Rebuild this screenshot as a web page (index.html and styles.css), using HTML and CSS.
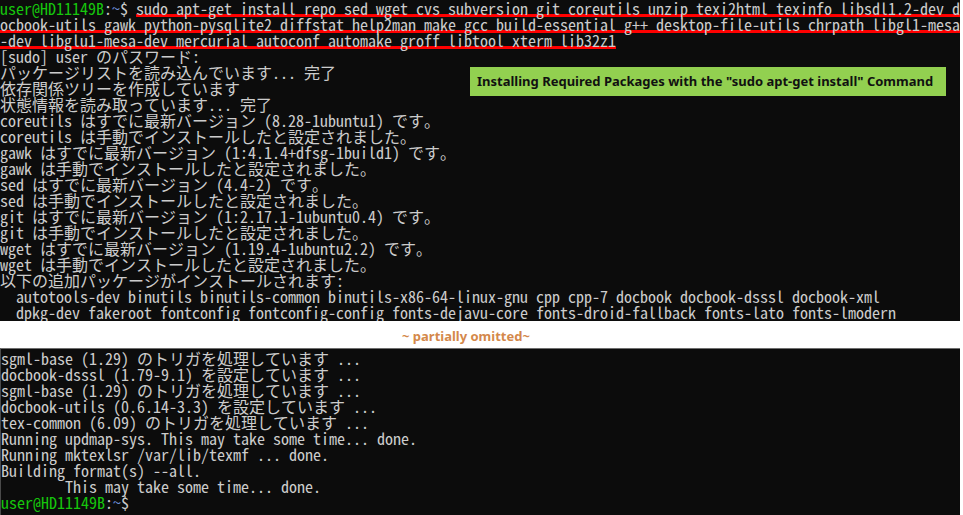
FILE: index.html
```html
<!DOCTYPE html>
<html lang="ja">
<head>
<meta charset="utf-8">
<title>sudo apt-get install</title>
<link rel="stylesheet" href="styles.css">
</head>
<body>
<div class="shot">
  <div class="term term-top">
    <div class="ln"><span class="pu">user@HD11149B</span><span class="pc">:</span><span class="pt">~</span><span class="pc">$ </span><span class="mark">sudo apt-get install repo sed wget cvs subversion git coreutils unzip texi2html texinfo libsdl1.2-dev d</span></div>
    <div class="ln"><span class="mark">ocbook-utils gawk python-pysqlite2 diffstat help2man make gcc build-essential g++ desktop-file-utils chrpath libgl1-mesa</span></div>
    <div class="ln"><span class="mark">-dev libglu1-mesa-dev mercurial autoconf automake groff libtool xterm lib32z1</span></div>
    <div class="ln">[sudo] user のパスワード:</div>
    <div class="ln">パッケージリストを読み込んでいます... 完了</div>
    <div class="ln">依存関係ツリーを作成しています</div>
    <div class="ln">状態情報を読み取っています... 完了</div>
    <div class="ln">coreutils はすでに最新バージョン (8.28-1ubuntu1) です。</div>
    <div class="ln">coreutils は手動でインストールしたと設定されました。</div>
    <div class="ln">gawk はすでに最新バージョン (1:4.1.4+dfsg-1build1) です。</div>
    <div class="ln">gawk は手動でインストールしたと設定されました。</div>
    <div class="ln">sed はすでに最新バージョン (4.4-2) です。</div>
    <div class="ln">sed は手動でインストールしたと設定されました。</div>
    <div class="ln">git はすでに最新バージョン (1:2.17.1-1ubuntu0.4) です。</div>
    <div class="ln">git は手動でインストールしたと設定されました。</div>
    <div class="ln">wget はすでに最新バージョン (1.19.4-1ubuntu2.2) です。</div>
    <div class="ln">wget は手動でインストールしたと設定されました。</div>
    <div class="ln">以下の追加パッケージがインストールされます:</div>
    <div class="ln">  autotools-dev binutils binutils-common binutils-x86-64-linux-gnu cpp cpp-7 docbook docbook-dsssl docbook-xml</div>
    <div class="ln">  dpkg-dev fakeroot fontconfig fontconfig-config fonts-dejavu-core fonts-droid-fallback fonts-lato fonts-lmodern</div>
    <div class="note">Installing Required Packages with the "sudo apt-get install" Command</div>
  </div>
  <div class="omit">~ partially omitted~</div>
  <div class="term term-bottom">
    <div class="ln">sgml-base (1.29) のトリガを処理しています ...</div>
    <div class="ln">docbook-dsssl (1.79-9.1) を設定しています ...</div>
    <div class="ln">sgml-base (1.29) のトリガを処理しています ...</div>
    <div class="ln">docbook-utils (0.6.14-3.3) を設定しています ...</div>
    <div class="ln">tex-common (6.09) のトリガを処理しています ...</div>
    <div class="ln">Running updmap-sys. This may take some time... done.</div>
    <div class="ln">Running mktexlsr /var/lib/texmf ... done.</div>
    <div class="ln">Building format(s) --all.</div>
    <div class="ln">        This may take some time... done.</div>
    <div class="ln"><span class="pu">user@HD11149B</span><span class="pc">:</span><span class="pt">~</span><span class="pc">$</span></div>
  </div>
</div>
</body>
</html>
```

FILE: styles.css
```css
html, body {
  margin: 0;
  padding: 0;
  background: #ffffff;
}

.shot {
  width: 960px;
  display: flex;
  flex-direction: column;
}

.term {
  background: #0c0c0c;
  color: #cccccc;
  font-family: "Noto Sans Mono CJK JP", "Noto Sans CJK JP", "Liberation Mono", monospace;
  font-size: 16px;
  line-height: 16px;
  overflow: hidden;
}

.term-top {
  position: relative;
  height: 321px;
}

.term-bottom {
  height: 166px;
  border-top: 1px solid #6e6e6e;
  border-left: 1px solid #4a4a4a;
  padding-top: 1px;
}

.ln {
  height: 16px;
  white-space: pre;
}

.pu {
  color: #16c60c;
}

.pc {
  color: #cccccc;
}

.pt {
  color: #6f8fd8;
}

.mark {
  text-decoration-line: underline;
  text-decoration-color: #ff0000;
  text-decoration-thickness: 3px;
  text-underline-offset: -1px;
  text-decoration-skip-ink: none;
}

.note {
  position: absolute;
  left: 470px;
  top: 67px;
  width: 469px;
  height: 29px;
  padding-left: 7px;
  background: #92d050;
  color: #111111;
  font-family: "Noto Sans", "Open Sans", sans-serif;
  font-weight: 700;
  font-size: 13px;
  line-height: 29px;
  white-space: nowrap;
}

.omit {
  height: 27px;
  padding-left: 402px;
  color: #d4884a;
  font-family: "Noto Sans", "Open Sans", sans-serif;
  font-weight: 700;
  font-size: 13px;
  line-height: 30px;
}
```
